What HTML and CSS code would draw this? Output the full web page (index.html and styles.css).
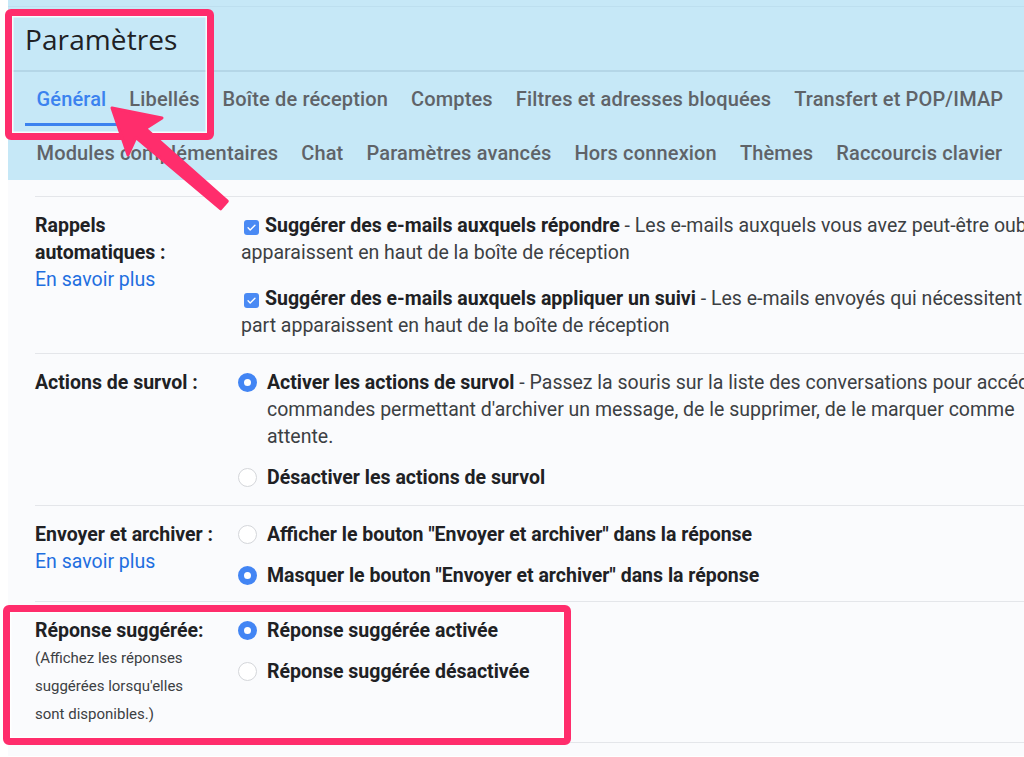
FILE: index.html
```html
<!DOCTYPE html>
<html lang="fr">
<head>
<meta charset="utf-8">
<title>Paramètres</title>
<link rel="stylesheet" href="styles.css">
</head>
<body>
<div class="page">
  <header class="header">
    <div class="title-bar"><h1 class="title">Paramètres</h1></div>
    <nav class="tabs">
      <div class="tab-row">
        <span class="tab active">Général</span>
        <span class="tab">Libellés</span>
        <span class="tab">Boîte de réception</span>
        <span class="tab">Comptes</span>
        <span class="tab">Filtres et adresses bloquées</span>
        <span class="tab">Transfert et POP/IMAP</span>
      </div>
      <div class="tab-row">
        <span class="tab">Modules complémentaires</span>
        <span class="tab">Chat</span>
        <span class="tab">Paramètres avancés</span>
        <span class="tab">Hors connexion</span>
        <span class="tab">Thèmes</span>
        <span class="tab">Raccourcis clavier</span>
      </div>
    </nav>
  </header>

  <main class="settings">
    <section class="row">
      <div class="label">
        <div class="label-title">Rappels<br>automatiques :</div>
        <a class="link">En savoir plus</a>
      </div>
      <div class="value">
        <div class="check-item">
          <span class="checkbox"><svg viewBox="0 0 16 16" width="11" height="11"><path d="M3 8.4l3.1 3.1L13 4.6" fill="none" stroke="#fff" stroke-width="2" stroke-linecap="round" stroke-linejoin="round"/></svg></span><b>Suggérer des e-mails auxquels répondre</b> - Les e-mails auxquels vous avez peut-être oublié<br>apparaissent en haut de la boîte de réception
        </div>
        <div class="check-item">
          <span class="checkbox"><svg viewBox="0 0 16 16" width="11" height="11"><path d="M3 8.4l3.1 3.1L13 4.6" fill="none" stroke="#fff" stroke-width="2" stroke-linecap="round" stroke-linejoin="round"/></svg></span><b>Suggérer des e-mails auxquels appliquer un suivi</b> - Les e-mails envoyés qui nécessitent<br>part apparaissent en haut de la boîte de réception
        </div>
      </div>
    </section>

    <section class="row">
      <div class="label">
        <div class="label-title">Actions de survol :</div>
      </div>
      <div class="value">
        <div class="radio-item">
          <span class="radio checked"></span>
          <div class="radio-text"><b>Activer les actions de survol</b> - Passez la souris sur la liste des conversations pour accéder<br>commandes permettant d'archiver un message, de le supprimer, de le marquer comme<br>attente.</div>
        </div>
        <div class="radio-item">
          <span class="radio"></span>
          <div class="radio-text"><b>Désactiver les actions de survol</b></div>
        </div>
      </div>
    </section>

    <section class="row compact">
      <div class="label">
        <div class="label-title">Envoyer et archiver :</div>
        <a class="link">En savoir plus</a>
      </div>
      <div class="value">
        <div class="radio-item">
          <span class="radio"></span>
          <div class="radio-text"><b>Afficher le bouton "Envoyer et archiver" dans la réponse</b></div>
        </div>
        <div class="radio-item">
          <span class="radio checked"></span>
          <div class="radio-text"><b>Masquer le bouton "Envoyer et archiver" dans la réponse</b></div>
        </div>
      </div>
    </section>

    <section class="row last">
      <div class="label">
        <div class="label-title">Réponse suggérée:</div>
        <div class="label-note">(Affichez les réponses<br>suggérées lorsqu'elles<br>sont disponibles.)</div>
      </div>
      <div class="value">
        <div class="radio-item">
          <span class="radio checked"></span>
          <div class="radio-text"><b>Réponse suggérée activée</b></div>
        </div>
        <div class="radio-item">
          <span class="radio"></span>
          <div class="radio-text"><b>Réponse suggérée désactivée</b></div>
        </div>
      </div>
    </section>
  </main>
</div>

<div class="highlight highlight-tabs"></div>
<div class="highlight highlight-reply"></div>
<svg class="arrow" width="1024" height="757" viewBox="0 0 1024 757">
  <polygon points="112,108 162,118 145.5,128.5 227.3,201.2 220.7,208.8 136,137.5 128,155" fill="#ff2d6c" stroke="#ff2d6c" stroke-width="3" stroke-linejoin="round"/>
</svg>
</body>
</html>
```

FILE: styles.css
```css
html, body {
  margin: 0;
  padding: 0;
  background: #ffffff;
  overflow: hidden;
  width: 1024px;
  height: 757px;
}
body {
  font-family: Roboto, "Liberation Sans", Arial, sans-serif;
  color: #202124;
  position: relative;
}
.page {
  margin-left: 8px;
  width: 1400px;
}
.header {
  background: #c6e8f7;
  padding-top: 6px;
}
.title-bar {
  border-top: 1px solid #bddfef;
  border-bottom: 2px solid #b4d6e7;
  height: 63px;
  display: flex;
  align-items: center;
  padding-left: 17px;
}
.title {
  margin: 0;
  font-family: "Open Sans", Roboto, sans-serif;
  font-weight: 400;
  font-size: 28px;
  color: #202124;
  letter-spacing: 0.1px;
}
.tabs {
  padding-left: 17px;
}
.tab-row {
  display: flex;
  height: 54px;
}
.tab {
  display: flex;
  align-items: center;
  padding: 3px 11.5px 0;
  font-size: 20px;
  font-weight: 500;
  letter-spacing: 0.15px;
  color: #5f6368;
  white-space: nowrap;
  box-sizing: border-box;
  border-bottom: 3px solid transparent;
}
.tab.active {
  color: #3b82ef;
  border-bottom-color: #3b82ef;
}
.settings {
  background: #fafbfd;
  padding: 16px 0 13px 27px;
}
.row {
  display: grid;
  grid-template-columns: 203px 1fr;
  border-top: 1px solid #e4e6ea;
  padding: 14.5px 0;
  font-size: 19.5px;
  line-height: 27px;
}
.row.compact {
  padding-bottom: 12.5px;
}
.row.last {
  border-bottom: 1px solid #e4e6ea;
}
.label-title {
  font-weight: 700;
  color: #202124;
}
.link {
  color: #1f6fe0;
  text-decoration: none;
  display: block;
}
.label-note {
  font-size: 15px;
  line-height: 28px;
  color: #3c4043;
}
.value {
  white-space: nowrap;
  color: #3c4043;
}
.value b {
  color: #202124;
}
.check-item {
  padding-left: 3px;
  margin-bottom: 19px;
}
.check-item:last-child {
  margin-bottom: 0;
}
.checkbox {
  display: inline-flex;
  align-items: center;
  justify-content: center;
  width: 15px;
  height: 15px;
  border-radius: 3px;
  background: #4a8af4;
  margin: 0 6px 0 3px;
  vertical-align: -1px;
}
.radio-item {
  display: flex;
  align-items: flex-start;
  margin-bottom: 14px;
}
.radio-item:last-child {
  margin-bottom: 0;
}
.radio {
  flex: none;
  width: 19px;
  height: 19px;
  border-radius: 50%;
  box-sizing: border-box;
  border: 1.5px solid #d4d6da;
  background: #ffffff;
  margin: 4px 10px 0 0;
}
.radio.checked {
  border: 6.5px solid #4285f4;
  background: #ffffff;
}
.highlight {
  position: absolute;
  border: 7px solid #ff2d6c;
  border-radius: 6px;
  box-shadow: inset 0 0 0 1.5px rgba(255,255,255,0.85);
  box-sizing: border-box;
}
.highlight-tabs {
  left: 5px;
  top: 9px;
  width: 209px;
  height: 131px;
}
.highlight-reply {
  left: 3px;
  top: 605px;
  width: 568px;
  height: 140px;
}
.arrow {
  position: absolute;
  left: 0;
  top: 0;
  pointer-events: none;
}
```
